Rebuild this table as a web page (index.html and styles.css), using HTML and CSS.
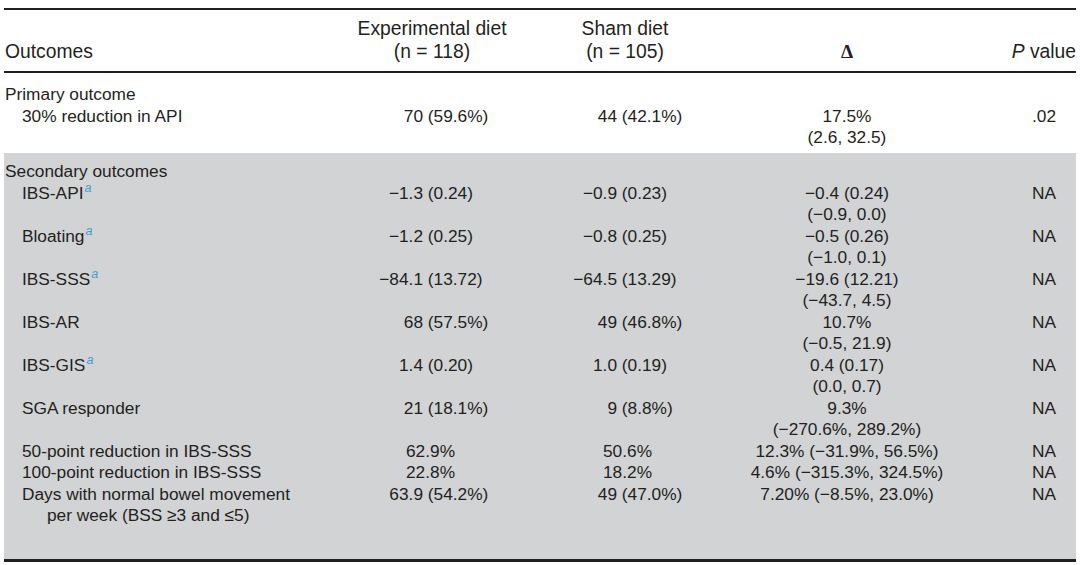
FILE: index.html
```html
<!DOCTYPE html>
<html lang="en">
<head>
<meta charset="utf-8">
<title>Outcomes table</title>
<link rel="stylesheet" href="styles.css">
</head>
<body>
<table class="outcomes">
  <colgroup>
    <col class="c-label">
    <col class="c-exp">
    <col class="c-sham">
    <col class="c-delta">
    <col class="c-p">
  </colgroup>
  <thead>
    <tr>
      <th class="h-label">Outcomes</th>
      <th class="h-center">Experimental diet<br>(n = 118)</th>
      <th class="h-center">Sham diet<br>(n = 105)</th>
      <th class="h-center h-delta">Δ</th>
      <th class="h-p"><i>P</i> value</th>
    </tr>
  </thead>
  <tbody class="primary">
    <tr class="first">
      <td class="label">Primary outcome</td>
      <td></td><td></td><td></td><td></td>
    </tr>
    <tr class="last">
      <td class="label sub">30% reduction in API</td>
      <td class="exp"><span class="lead">70</span> (59.6%)</td>
      <td class="sham"><span class="lead">44</span> (42.1%)</td>
      <td class="delta">17.5%<br>(2.6, 32.5)</td>
      <td class="p">.02</td>
    </tr>
  </tbody>
  <tbody class="secondary">
    <tr class="first">
      <td class="label">Secondary outcomes</td>
      <td></td><td></td><td></td><td></td>
    </tr>
    <tr>
      <td class="label sub">IBS-API<sup>a</sup></td>
      <td class="exp"><span class="lead">−1.3</span> (0.24)</td>
      <td class="sham"><span class="lead">−0.9</span> (0.23)</td>
      <td class="delta">−0.4 (0.24)<br>(−0.9, 0.0)</td>
      <td class="p">NA</td>
    </tr>
    <tr>
      <td class="label sub">Bloating<sup>a</sup></td>
      <td class="exp"><span class="lead">−1.2</span> (0.25)</td>
      <td class="sham"><span class="lead">−0.8</span> (0.25)</td>
      <td class="delta">−0.5 (0.26)<br>(−1.0, 0.1)</td>
      <td class="p">NA</td>
    </tr>
    <tr>
      <td class="label sub">IBS-SSS<sup>a</sup></td>
      <td class="exp"><span class="lead">−84.1</span> (13.72)</td>
      <td class="sham"><span class="lead">−64.5</span> (13.29)</td>
      <td class="delta">−19.6 (12.21)<br>(−43.7, 4.5)</td>
      <td class="p">NA</td>
    </tr>
    <tr>
      <td class="label sub">IBS-AR</td>
      <td class="exp"><span class="lead">68</span> (57.5%)</td>
      <td class="sham"><span class="lead">49</span> (46.8%)</td>
      <td class="delta">10.7%<br>(−0.5, 21.9)</td>
      <td class="p">NA</td>
    </tr>
    <tr>
      <td class="label sub">IBS-GIS<sup>a</sup></td>
      <td class="exp"><span class="lead">1.4</span> (0.20)</td>
      <td class="sham"><span class="lead">1.0</span> (0.19)</td>
      <td class="delta">0.4 (0.17)<br>(0.0, 0.7)</td>
      <td class="p">NA</td>
    </tr>
    <tr>
      <td class="label sub">SGA responder</td>
      <td class="exp"><span class="lead">21</span> (18.1%)</td>
      <td class="sham"><span class="lead">9</span> (8.8%)</td>
      <td class="delta">9.3%<br>(−270.6%, 289.2%)</td>
      <td class="p">NA</td>
    </tr>
    <tr>
      <td class="label sub">50-point reduction in IBS-SSS</td>
      <td class="exp plain">62.9%</td>
      <td class="sham plain">50.6%</td>
      <td class="delta">12.3% (−31.9%, 56.5%)</td>
      <td class="p">NA</td>
    </tr>
    <tr>
      <td class="label sub">100-point reduction in IBS-SSS</td>
      <td class="exp plain">22.8%</td>
      <td class="sham plain">18.2%</td>
      <td class="delta">4.6% (−315.3%, 324.5%)</td>
      <td class="p">NA</td>
    </tr>
    <tr class="last">
      <td class="label sub hang">Days with normal bowel movement<br>per week (BSS ≥3 and ≤5)</td>
      <td class="exp"><span class="lead">63.9</span> (54.2%)</td>
      <td class="sham"><span class="lead">49</span> (47.0%)</td>
      <td class="delta">7.20% (−8.5%, 23.0%)</td>
      <td class="p">NA</td>
    </tr>
  </tbody>
</table>
</body>
</html>
```
FILE: styles.css
```css
html, body {
  margin: 0;
  padding: 0;
  background: #ffffff;
}

body {
  font-family: "Liberation Sans", Arial, Helvetica, sans-serif;
  color: #231f20;
}

.outcomes {
  margin: 8px 0 0 4px;
  width: 1072px;
  table-layout: fixed;
  border-collapse: collapse;
  border-spacing: 0;
  border-bottom: 3px solid #231f20;
}

.c-label { width: 336px; }
.c-exp { width: 184px; }
.c-sham { width: 202px; }
.c-delta { width: 242px; }
.c-p { width: 108px; }

/* header */
.outcomes thead th {
  font-weight: normal;
  font-size: 19.3px;
  line-height: 23px;
  vertical-align: bottom;
  padding: 7px 0 8px 0;
  border-top: 2px solid #231f20;
  border-bottom: 2px solid #231f20;
  white-space: nowrap;
}

.h-label {
  text-align: left;
  padding-left: 1px !important;
}

.h-center {
  text-align: center;
}

.outcomes thead th.h-delta {
  font-family: "Liberation Serif", "Times New Roman", serif;
  font-weight: bold;
}

.h-p {
  text-align: right;
}

/* body cells */
.outcomes td {
  font-size: 17.3px;
  line-height: 21.5px;
  vertical-align: top;
  padding: 0;
  white-space: nowrap;
}

.secondary {
  background: #d1d3d4;
}

.primary tr.first td { padding-top: 11px; }
.primary tr.last td { padding-bottom: 4.5px; }
.secondary tr.first td { padding-top: 8px; }
.secondary tr.last td { padding-bottom: 32px; }

.label {
  text-align: left;
  padding-left: 1px !important;
}

.label.sub {
  padding-left: 18px !important;
}

.label.hang {
  padding-left: 43px !important;
  text-indent: -25px;
}

.label sup {
  font-size: 12.5px;
  line-height: 0;
  font-style: italic;
  color: #3f9fd8;
  vertical-align: 7px;
  margin-left: 1px;
}

.lead {
  display: inline-block;
  width: 60px;
  text-align: right;
  text-indent: 0;
}

.exp { padding-left: 23px !important; }
.sham { padding-left: 33px !important; }
.exp.plain { padding-left: 66px !important; }
.sham.plain { padding-left: 79px !important; }

.delta {
  text-align: center;
}

.p {
  text-align: right;
  padding-right: 20px !important;
}
```
